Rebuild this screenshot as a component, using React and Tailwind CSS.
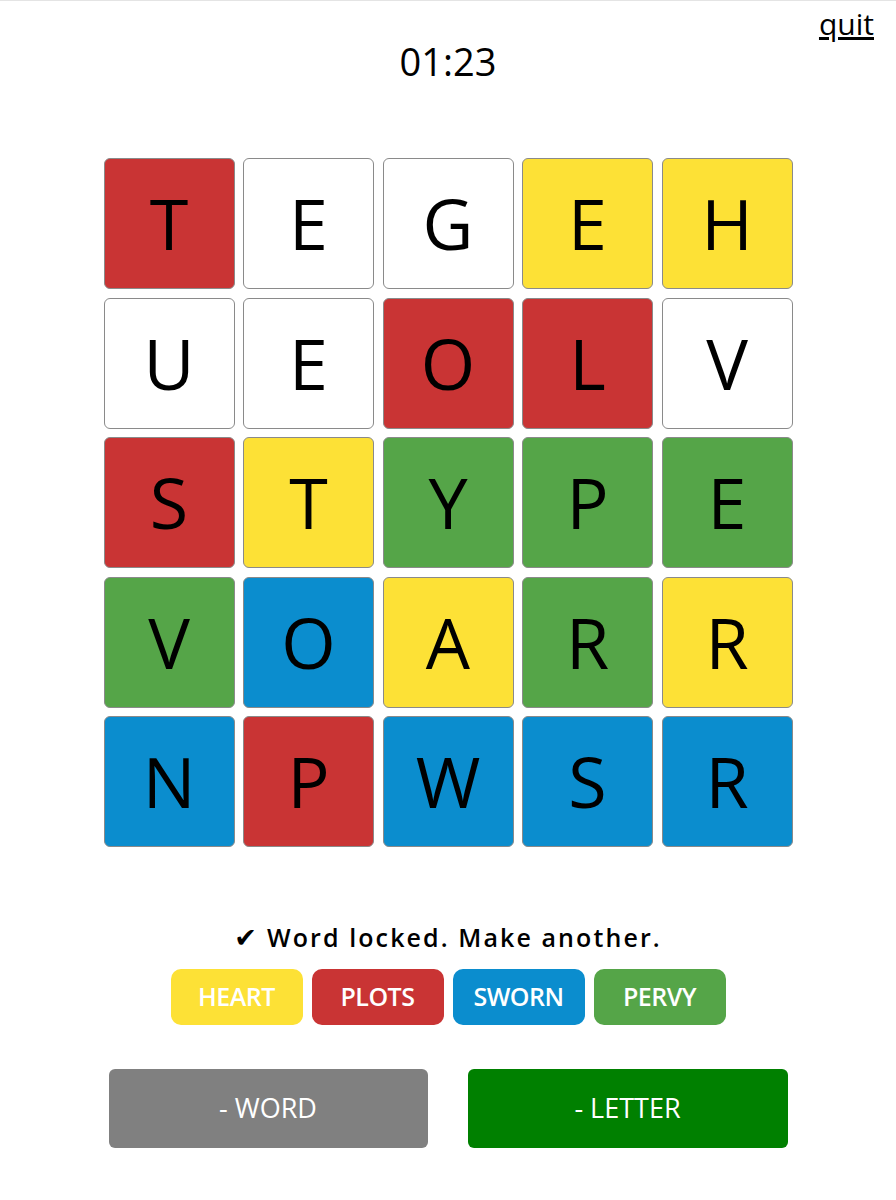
const RED = "bg-[#c93434]";
const YELLOW = "bg-[#fde136]";
const GREEN = "bg-[#55a548]";
const BLUE = "bg-[#0b8dce]";
const WHITE = "bg-white";

const GRID = [
  [["T", RED], ["E", WHITE], ["G", WHITE], ["E", YELLOW], ["H", YELLOW]],
  [["U", WHITE], ["E", WHITE], ["O", RED], ["L", RED], ["V", WHITE]],
  [["S", RED], ["T", YELLOW], ["Y", GREEN], ["P", GREEN], ["E", GREEN]],
  [["V", GREEN], ["O", BLUE], ["A", YELLOW], ["R", GREEN], ["R", YELLOW]],
  [["N", BLUE], ["P", RED], ["W", BLUE], ["S", BLUE], ["R", BLUE]],
];

const WORDS = [
  ["HEART", YELLOW],
  ["PLOTS", RED],
  ["SWORN", BLUE],
  ["PERVY", GREEN],
];

function Tile({ letter, color }) {
  return (
    <div
      className={`w-[131px] h-[131px] rounded-[6px] border border-[#8a8a8a] flex items-center justify-center text-[70px] text-black ${color}`}
    >
      {letter}
    </div>
  );
}

export default function App() {
  return (
    <div
      className="relative w-full h-[1200px] bg-white border-t border-[#e4e4e4] flex flex-col items-center text-black"
      style={{ fontFamily: '"Open Sans", "DejaVu Sans", sans-serif' }}
    >
      <a href="#" className="absolute top-0 right-[22px] text-[30px] underline text-black">
        quit
      </a>

      <div className="mt-[32px] text-[38px]">01:23</div>

      <div className="mt-[68px] grid grid-cols-5 gap-[8.5px]">
        {GRID.flat().map(([l, c], i) => (
          <Tile key={i} letter={l} color={c} />
        ))}
      </div>

      <div className="mt-[74px] h-[34px] flex items-center text-[25px] font-semibold tracking-[2.1px]">
        <span className="text-[27px] mr-[8px]" style={{ fontFamily: '"DejaVu Sans", sans-serif' }}>
          ✔
        </span>
        Word locked. Make another.
      </div>

      <div className="mt-[14px] flex gap-[9px]">
        {WORDS.map(([w, c]) => (
          <div
            key={w}
            className={`w-[132px] h-[56px] rounded-[10px] flex items-center justify-center text-white text-[25px] font-semibold tracking-[-0.5px] ${c}`}
          >
            {w}
          </div>
        ))}
      </div>

      <div className="mt-[44px] flex gap-[40px]">
        <button className="w-[319px] h-[79px] rounded-[6px] bg-[#808080] text-white text-[27px]">
          - WORD
        </button>
        <button className="w-[320px] h-[79px] rounded-[6px] bg-[#008000] text-white text-[27px]">
          - LETTER
        </button>
      </div>
    </div>
  );
}
